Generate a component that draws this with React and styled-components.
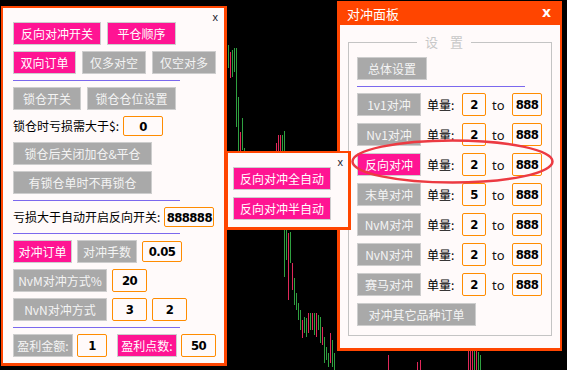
import React from 'react';
import styled, { createGlobalStyle } from 'styled-components';

const GlobalStyle = createGlobalStyle`
  body {
    margin: 0;
    background: #000;
  }
`;

const Desktop = styled.div`
  position: relative;
  width: 567px;
  height: 370px;
  background: #000;
  overflow: hidden;
  font-family: "Noto Sans CJK SC", "Microsoft YaHei", sans-serif;
  font-size: 12px;
  color: #000;
`;

const Chart = styled.svg`
  position: absolute;
  left: 0;
  top: 0;
`;

const LeftPanel = styled.div`
  position: absolute;
  left: 1px;
  top: 6px;
  width: 226px;
  height: 360px;
  box-sizing: border-box;
  border-style: solid;
  border-color: #ff4500;
  border-width: 2px 3px 3px 2px;
  background: #fffafa;
  padding: 14px 0 0 10px;
`;

const SidePopup = styled.div`
  position: absolute;
  left: 226px;
  top: 151px;
  width: 125px;
  height: 79px;
  box-sizing: border-box;
  border-style: solid;
  border-color: #ff4500;
  border-width: 2px 3px 3px 2px;
  background: #fffafa;
  padding: 14px 0 0 5px;
  z-index: 2;
`;

const HedgePanel = styled.div`
  position: absolute;
  left: 337px;
  top: 1px;
  width: 225px;
  height: 350px;
  box-sizing: border-box;
  background: #ff4500;
  padding: 0 2px 3px 3px;
  display: flex;
  flex-direction: column;
  z-index: 1;
`;

const TitleBar = styled.div`
  height: 24px;
  display: flex;
  align-items: center;
  justify-content: space-between;
  padding: 0 9px 0 7px;
  color: #fff;
  font-size: 13px;
`;

const TitleClose = styled.span`
  font-family: "DejaVu Sans", sans-serif;
  font-weight: 700;
  font-size: 14px;
  margin-top: -2px;
`;

const PanelBody = styled.div`
  flex: 1;
  background: #fffafa;
  padding: 0 8px;
`;

const Group = styled.fieldset`
  margin: 9px 0 0;
  border: 1px solid #c4c4c4;
  padding: 7px 8px 9px;
  display: flex;
  flex-direction: column;
  gap: 7px;
`;

const GroupTitle = styled.legend`
  margin-left: 60px;
  padding: 0 8px;
  color: #c8c8c8;
  font-size: 13px;
  line-height: 16px;
  word-spacing: 9px;
`;

const CloseX = styled.span`
  position: absolute;
  right: ${p => p.$right}px;
  top: ${p => p.$top}px;
  font-family: "Liberation Sans", sans-serif;
  font-size: 11px;
  line-height: 1;
  color: #1a1a2e;
`;

const Stack = styled.div`
  display: flex;
  flex-direction: column;
  gap: ${p => p.$gap ?? 6}px;
`;

const Row = styled.div`
  display: flex;
  align-items: center;
  gap: ${p => p.$gap ?? 6}px;
`;

const Btn = styled.div`
  box-sizing: border-box;
  width: ${p => p.$w}px;
  height: 23px;
  flex: none;
  display: flex;
  align-items: center;
  justify-content: center;
  background: ${p => (p.$pink ? '#ff1493' : '#a9a9a9')};
  border: 1px solid #cdcdcd;
  color: ${p => (p.$pink ? '#fff' : '#f4f4f4')};
  font-size: 12px;
  line-height: 1;
  white-space: nowrap;
  margin-left: ${p => p.$ml ?? 0}px;
`;

const NumBox = styled.div`
  box-sizing: border-box;
  width: ${p => p.$w}px;
  height: ${p => p.$h ?? 23}px;
  flex: none;
  display: flex;
  align-items: center;
  justify-content: center;
  border: 1px solid #ff8c00;
  border-radius: 2px;
  background: #fffafa;
  font-family: "DejaVu Sans Condensed", "Liberation Sans Narrow", "Liberation Sans", sans-serif;
  font-stretch: condensed;
  font-weight: 700;
  font-size: 13px;
  letter-spacing: -0.6px;
  color: #000;
  margin-left: ${p => p.$ml ?? 0}px;
`;

const Label = styled.span`
  font-size: 12px;
  line-height: 20px;
  white-space: nowrap;
  width: ${p => (p.$w ? `${p.$w}px` : 'auto')};
  margin-left: ${p => p.$ml ?? 0}px;
  flex: none;
`;

const ToText = styled.span`
  width: 26px;
  padding-left: 6px;
  box-sizing: border-box;
  font-family: "Noto Sans", sans-serif;
  font-size: 13px;
  color: #111;
`;

const Divider = styled.div`
  width: ${p => p.$w}px;
  height: 1px;
  background: #7b68ee;
  margin: ${p => p.$m ?? '0'};
`;

const Highlight = styled.svg`
  position: absolute;
  left: 350px;
  top: 138px;
  z-index: 3;
`;

const G = '#2fa040';
const R = '#e0285a';

const candles = [
  [228, 45, 68, G], [230, 52, 78, R], [232, 50, 77, G], [234, 48, 72, G], [236, 48, 127, G],
  [238, 97, 153, G], [240, 132, 153, R], [242, 118, 150, G], [244, 148, 153, G],
  [276, 143, 152, R], [278, 135, 152, R], [280, 135, 152, R], [282, 135, 152, G], [284, 131, 152, G],
  [284, 230, 277, G], [286, 230, 260, G], [288, 233, 300, R], [290, 232, 263, G], [292, 263, 290, R],
  [294, 278, 305, G], [296, 293, 310, G], [298, 303, 320, G], [300, 310, 330, G], [302, 320, 338, R],
  [304, 317, 333, G], [306, 318, 337, G], [308, 313, 333, R], [310, 313, 330, G], [312, 313, 330, R],
  [314, 313, 335, G], [316, 313, 337, R], [318, 315, 330, G], [320, 317, 343, G], [322, 327, 345, R],
  [324, 337, 363, G], [326, 347, 360, G], [328, 353, 367, G], [330, 333, 363, R], [332, 340, 367, G],
  [334, 353, 370, G],
  [388, 355, 370, R], [417, 362, 370, R], [420, 360, 370, R], [468, 345, 370, R], [470, 340, 370, R],
  [472, 342, 370, R], [474, 340, 370, G], [476, 342, 370, R], [478, 352, 370, G], [480, 355, 370, G],
];

const hedgeRows = [
  { name: '1v1对冲', min: 2 },
  { name: 'Nv1对冲', min: 2 },
  { name: '反向对冲', min: 2, pink: true },
  { name: '末单对冲', min: 5 },
  { name: 'NvM对冲', min: 2 },
  { name: 'NvN对冲', min: 2 },
  { name: '赛马对冲', min: 2 },
];

export default function App() {
  return (
    <>
      <GlobalStyle />
      <Desktop>
        <Chart width="567" height="370" viewBox="0 0 567 370">
          {candles.map(([x, y1, y2, c], i) => (
            <line key={i} x1={x + 0.5} x2={x + 0.5} y1={y1} y2={y2} stroke={c} strokeWidth="1" />
          ))}
        </Chart>

        <LeftPanel>
          <CloseX $right={6} $top={4}>x</CloseX>
          <Stack>
            <Row>
              <Btn $pink $w={88}>反向对冲开关</Btn>
              <Btn $pink $w={69}>平仓顺序</Btn>
            </Row>
            <Row>
              <Btn $pink $w={63}>双向订单</Btn>
              <Btn $w={64}>仅多对空</Btn>
              <Btn $w={64}>仅空对多</Btn>
            </Row>
            <Divider $w={167} />
            <Row>
              <Btn $w={68}>锁仓开关</Btn>
              <Btn $w={89}>锁仓仓位设置</Btn>
            </Row>
            <Row $gap={4}>
              <Label>锁仓时亏损需大于$:</Label>
              <NumBox $w={40} $h={20}>0</NumBox>
            </Row>
            <Btn $w={139}>锁仓后关闭加仓&amp;平仓</Btn>
            <Btn $w={139}>有锁仓单时不再锁仓</Btn>
            <Divider $w={167} />
            <Row $gap={4}>
              <Label>亏损大于自动开启反向开关:</Label>
              <NumBox $w={50} $h={20}>888888</NumBox>
            </Row>
            <Divider $w={167} />
            <Row $gap={5}>
              <Btn $pink $w={59}>对冲订单</Btn>
              <Btn $w={60}>对冲手数</Btn>
              <NumBox $w={40} $h={21}>0.05</NumBox>
            </Row>
            <Row $gap={5}>
              <Btn $w={94}>NvM对冲方式%</Btn>
              <NumBox $w={35}>20</NumBox>
            </Row>
            <Row $gap={5}>
              <Btn $w={94}>NvN对冲方式</Btn>
              <NumBox $w={35}>3</NumBox>
              <NumBox $w={35}>2</NumBox>
            </Row>
            <Divider $w={167} />
            <Row $gap={4}>
              <Btn $w={60}>盈利金额:</Btn>
              <NumBox $w={30}>1</NumBox>
              <Btn $pink $w={60} $ml={6}>盈利点数:</Btn>
              <NumBox $w={35}>50</NumBox>
            </Row>
          </Stack>
        </LeftPanel>

        <HedgePanel>
          <TitleBar>
            <span>对冲面板</span>
            <TitleClose>x</TitleClose>
          </TitleBar>
          <PanelBody>
            <Group>
              <GroupTitle>设 置</GroupTitle>
              <Btn $w={70}>总体设置</Btn>
              <Divider $w={168} $m="-1px 0" />
              {hedgeRows.map(r => (
                <Row key={r.name} $gap={0}>
                  <Btn $pink={r.pink} $w={64}>{r.name}</Btn>
                  <Label $w={35} $ml={6}>单量:</Label>
                  <NumBox $w={24}>{r.min}</NumBox>
                  <ToText>to</ToText>
                  <NumBox $w={30}>888</NumBox>
                </Row>
              ))}
              <Btn $w={119}>对冲其它品种订单</Btn>
            </Group>
          </PanelBody>
        </HedgePanel>

        <SidePopup>
          <CloseX $right={5} $top={4}>x</CloseX>
          <Stack $gap={7}>
            <Btn $pink $w={98}>反向对冲全自动</Btn>
            <Btn $pink $w={98}>反向对冲半自动</Btn>
          </Stack>
        </SidePopup>

        <Highlight width="206" height="48" viewBox="0 0 206 48">
          <ellipse cx="102.5" cy="23.5" rx="100" ry="21" fill="none" stroke="#ec3a42" strokeWidth="2.5" />
        </Highlight>
      </Desktop>
    </>
  );
}
